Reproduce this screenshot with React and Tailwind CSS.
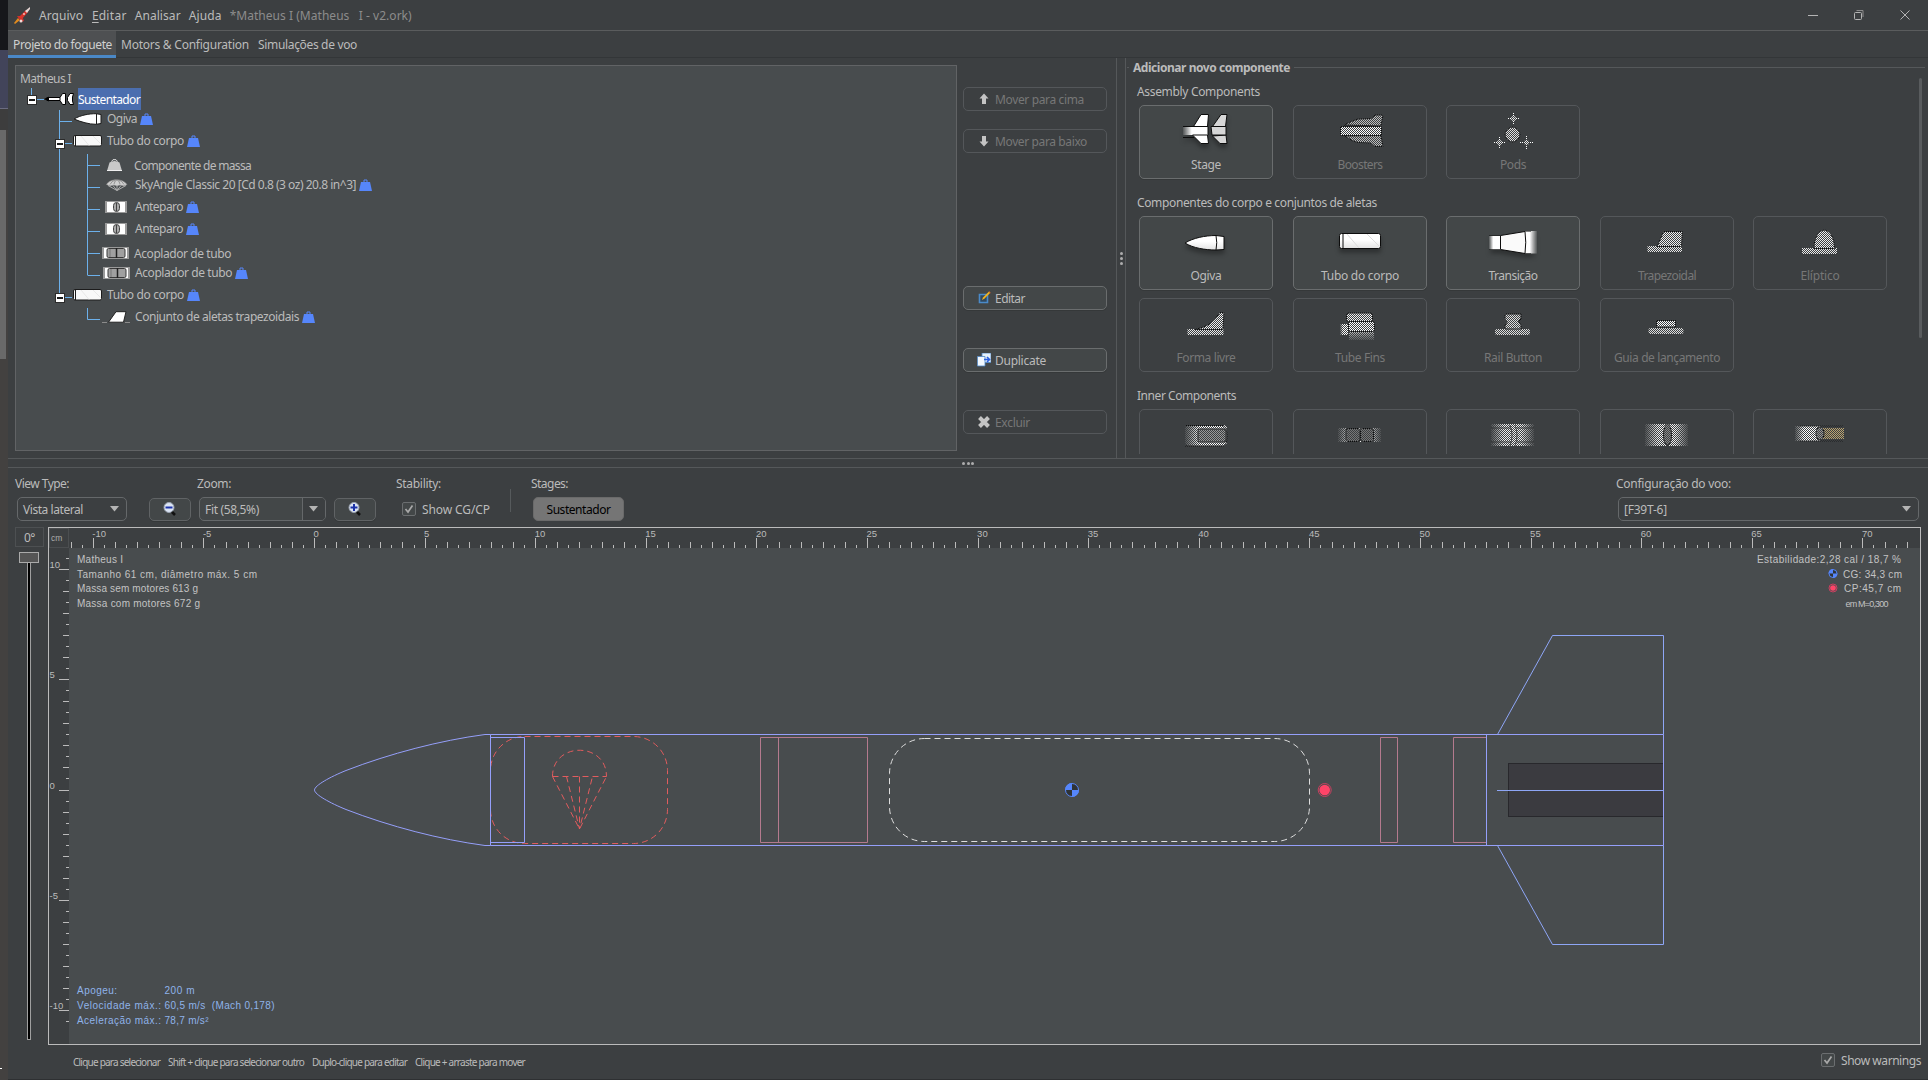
import { useLayoutEffect, useRef } from "react";

/* Text whose tracking is adjusted so that it spans `w` pixels. */
function T({ w, className = "", children }) {
  const ref = useRef(null);
  useLayoutEffect(() => {
    const el = ref.current;
    if (!w) return;
    el.style.letterSpacing = "0px";
    const natural = el.getBoundingClientRect().width;
    el.style.letterSpacing = `${(w - natural) / el.textContent.length}px`;
  }, [w]);
  return (
    <span ref={ref} className={`inline-block whitespace-pre shrink-0 ${className}`}>
      {children}
    </span>
  );
}

/* ---------- title bar, tabs ---------- */

function TitleBar() {
  return (
    <header className="flex h-[31px] shrink-0 items-center border-b border-[#5a5c5d] pl-1.5 pt-0.5">
      <svg width="18" height="18" viewBox="0 0 18 18" className="mr-[7px]">
        <path d="M0 16 L4 11 L6 13 L1 17Z" fill="#e08a1e" />
        <path d="M3 9 L8 9 L10 14 L7 15 L5 12Z" fill="#c9302a" />
        <path d="M5 10 L12 3 L14 5 L8 12Z" fill="#d8332b" />
        <path d="M11 4 L16 0 L16 2 L13 6Z" fill="#e6d6d4" />
        <circle cx="7" cy="14" r="1.5" fill="#f3d9d6" />
        <circle cx="10" cy="7" r="1" fill="#f0bcb8" />
      </svg>
      <T w={44}>Arquivo</T>
      <span className="ml-[9px] flex"><T className="underline underline-offset-2">E</T><T w={28}>ditar</T></span>
      <T w={46} className="ml-2">Analisar</T>
      <T w={33} className="ml-2">Ajuda</T>
      <T w={182} className="ml-2 text-[#8c8c8c]">*Matheus I (Matheus   I - v2.ork)</T>
      <svg width="120" height="30" viewBox="0 0 120 30" className="-mt-0.5 ml-auto mr-2" fill="none" stroke="#b4b4b4">
        <path d="M8 15.5h10" />
        <rect x="54.5" y="12.5" width="7" height="7" rx="1" />
        <path d="M56.5 10.5h6.5v6.5" stroke="#8c8c8c" />
        <path d="M100.500 10.500l9 9m0-9l-9 9" />
      </svg>
    </header>
  );
}

function Tabs() {
  return (
    <nav className="flex h-[27px] shrink-0 items-center border-b border-[#333638]">
      <div className="flex h-[27px] w-[108px] items-center border-b-[3px] border-[#4a88c7] bg-[#4e5052] pl-[5px] pt-1 text-[#d0d0d0]">
        <T w={99}>Projeto do foguete</T>
      </div>
      <T w={128} className="ml-[5px] pt-0.5">Motors &amp; Configuration</T>
      <T w={99} className="ml-[9px] pt-0.5">Simulações de voo</T>
    </nav>
  );
}

/* ---------- component tree ---------- */

function Weight() {
  return (
    <svg width="13" height="12" viewBox="0 0 13 12" className="ml-[3px] shrink-0">
      <path d="M2 3h9l2 9H0z" fill="#5686fb" />
      <path d="M5 3.500V1h3v2.500" fill="none" stroke="#5686fb" />
    </svg>
  );
}

function StageIcon() {
  return (
    <svg width="30" height="12" viewBox="0 0 30 12">
      <path d="M3 4.500h14v3H3z" fill="#fff" stroke="#000" />
      <path d="M0 6l5-2.500v5z" fill="#000" />
      <path d="M16 4.500l2.500-4h3v11h-3l-2.500-4z" fill="#fff" stroke="#000" />
      <path d="M23.500 4.500l2.500-4h3.500l-1 3.500v4l1 3.500h-3.500l-2.500-4z" fill="#fff" stroke="#000" />
    </svg>
  );
}

function NoseIcon() {
  return (
    <svg width="30" height="12" viewBox="0 0 30 12">
      <path d="M1 6C8 2 16 .7 23 .7L28 1.500v9L23 11.300C16 11.300 8 9 1 6z" fill="#fff" stroke="#1c1c1c" />
      <path d="M23.500 1v10" stroke="#1c1c1c" />
    </svg>
  );
}

function TubeIcon() {
  return (
    <svg width="30" height="12" viewBox="0 0 30 12">
      <rect x=".5" y=".5" width="28" height="10.500" rx="1.500" fill="#f8f8f8" stroke="#1c1c1c" />
      <path d="M2.500 1v10" stroke="#1c1c1c" />
      <path d="M8 1l8 9.500M20 1l8 8" stroke="#e8e8e8" />
    </svg>
  );
}

function MassIcon() {
  return (
    <svg width="15" height="12" viewBox="0 0 15 12">
      <path d="M2.500 3.500Q7.500 .5 12.500 3.500L15 12H0z" fill="#c9c9c9" />
      <path d="M4.500 2.500L6 .7h3l1.500 1.800" fill="none" stroke="#dedede" />
      <path d="M0 11.500h15" stroke="#f0f0f0" />
    </svg>
  );
}

function ChuteIcon() {
  return (
    <svg width="22" height="12" viewBox="0 0 22 12">
      <path d="M.5 5.500C4-.8 17-.8 21 5.500L18 7 14 6 11 7 8 6 4 7z" fill="#cfcfcf" stroke="#8e8e8e" strokeWidth=".6" />
      <path d="M2 6.500L11 11.500 20 6.500M7 6.500l4 5 4-5M11 6v5" fill="none" stroke="#b5b5b5" strokeWidth=".9" />
      <path d="M8 5Q9 1 11 .8Q13 1 14 5M4 5.500Q6 2 9 1M18 5.500Q16 2 13 1" fill="none" stroke="#777" strokeWidth=".7" />
    </svg>
  );
}

function BulkheadIcon() {
  return (
    <svg width="22" height="12" viewBox="0 0 22 12">
      <rect width="22" height="12" fill="#9a9a9a" />
      <rect x="2" y="1" width="18" height="10" fill="#fff" />
      <rect x="8.500" y="1.500" width="6" height="9" rx="3" fill="#aaa" stroke="#444" />
      <path d="M11.500 2v8" stroke="#444" />
    </svg>
  );
}

function CouplerIcon() {
  return (
    <svg width="27" height="12" viewBox="0 0 27 12">
      <rect width="27" height="12" fill="#9a9a9a" />
      <rect x="2" y="1" width="23" height="10" fill="#fff" />
      <rect x="5" y="1.500" width="18" height="9" rx="1.500" fill="#a0a0a0" stroke="#3a3a3a" />
      <path d="M14.500 1v10" stroke="#222" strokeWidth="1.500" />
      <path d="M8 2v8" stroke="#777" />
    </svg>
  );
}

function FinIcon() {
  return (
    <svg width="28" height="12" viewBox="0 0 28 12">
      <path d="M0 11.500h5M23 11.500h5" stroke="#8b8b8b" />
      <path d="M6.500 11.200L14 .7h10L21.500 11.200z" fill="#fff" stroke="#222" />
    </svg>
  );
}

const rows = [
  { pad: "pl-7", gap: "ml-1", icon: <StageIcon />, label: "Sustentador", w: 62, selected: true },
  { pad: "pl-[57px]", gap: "ml-1", icon: <NoseIcon />, label: "Ogiva", w: 30, weight: true },
  { pad: "pl-[57px]", gap: "ml-1", icon: <TubeIcon />, label: "Tubo do corpo", w: 77, weight: true },
  { pad: "pl-[91px]", gap: "ml-3 pt-px", icon: <MassIcon />, label: "Componente de massa", w: 117 },
  { pad: "pl-[90px]", gap: "ml-[7px]", icon: <ChuteIcon />, label: "SkyAngle Classic 20 [Cd 0.8 (3 oz) 20.8 in^3]", w: 221, weight: true },
  { pad: "pl-[89px]", gap: "ml-2", icon: <BulkheadIcon />, label: "Anteparo", w: 48, weight: true },
  { pad: "pl-[89px]", gap: "ml-2", icon: <BulkheadIcon />, label: "Anteparo", w: 48, weight: true },
  { pad: "pl-[86px]", gap: "ml-[5px] pt-px", icon: <CouplerIcon />, label: "Acoplador de tubo", w: 97 },
  { pad: "pl-[87px]", gap: "ml-[5px]", icon: <CouplerIcon />, label: "Acoplador de tubo", w: 97, weight: true },
  { pad: "pl-[57px]", gap: "ml-1", icon: <TubeIcon />, label: "Tubo do corpo", w: 77, weight: true },
  { pad: "pl-[86px]", gap: "ml-[5px]", icon: <FinIcon />, label: "Conjunto de aletas trapezoidais", w: 164, weight: true },
];

function Handle({ x, y }) {
  return (
    <g>
      <rect x={x - 4.5} y={y - 4.5} width="9" height="9" fill="#fff" stroke="#2b2b2b" />
      <path d={`M${x - 3} ${y}h6`} stroke="#1b1b1b" strokeWidth="2" />
    </g>
  );
}

function TreeGuides() {
  const childElbows = [77.5, 99.5, 121.5, 143.5, 165.5, 187.5];
  return (
    <svg width="120" height="250" viewBox="0 0 120 250" className="pointer-events-none absolute left-0 top-[22px]">
      <g stroke="#6cb0ea" fill="none">
        <path d="M15.500 0v8M20 11.500h8" />
        <path d="M43.500 22v187M44 33.500h12M49 55.500h7M49 209.500h7" />
        <path d="M71.500 66v121.500" />
        {childElbows.map((y) => <path key={y} d={`M72 ${y}h12`} />)}
        <path d="M71.500 220v11.500h12.500" />
      </g>
      <Handle x={16} y={12} />
      <Handle x={44} y={56} />
      <Handle x={44} y={210} />
    </svg>
  );
}

function Tree() {
  return (
    <section className="relative ml-[7px] mt-[7px] h-[386px] w-[942px] shrink-0 border border-[#616365] bg-[#484c4e]">
      <div className="flex h-[22px] items-center pl-1"><T w={51} className="pt-[3px]">Matheus I</T></div>
      <div className="relative -mt-[22px] pt-[22px]">
        <TreeGuides />
        {rows.map((r, i) => (
          <div key={i} className={`flex h-[22px] items-center ${r.pad} ${r.weight ? "pb-1" : "pt-px"}`}>
            <span className={`shrink-0 ${r.weight ? "" : "-mt-px"}`}>{r.icon}</span>
            {r.selected ? (
              <span className="-mt-px ml-1 flex h-[22px] w-[63px] items-center bg-[#4b6eaf] pt-0.5 text-white"><T w={62}>{r.label}</T></span>
            ) : (
              <T w={r.w} className={r.gap}>{r.label}</T>
            )}
            {r.weight && <Weight />}
          </div>
        ))}
      </div>
    </section>
  );
}

/* ---------- side actions ---------- */

function Action({ label, w, icon, disabled, className = "" }) {
  return (
    <button className={`flex h-6 w-36 shrink-0 items-center rounded-[5px] border pl-[13px] ${disabled ? "border-[#54575a] text-[#777]" : "border-[#6a6d6e] bg-[#434748] shadow-[0_1px_0_#353839]"} ${className}`}>
      <svg width="14" height="14" viewBox="0 0 14 14" className="mr-1">{icon}</svg>
      <T w={w} className="pt-0.5">{label}</T>
    </button>
  );
}

function Actions() {
  return (
    <aside className="ml-1.5 flex w-[153px] shrink-0 flex-col pt-[29px]">
      <Action disabled label="Mover para cima" w={89} icon={<path d="M7 1.500l4.500 5H9V12H5V6.500H2.500z" fill="#c4c4c4" />} />
      <Action disabled label="Mover para baixo" w={92} className="mt-[18px]" icon={<path d="M7 12.500l4.500-5H9V2H5v5.500H2.500z" fill="#c4c4c4" />} />
      <Action
        label="Editar" w={30} className="mt-[133px]"
        icon={<><path d="M2.500 3.500h8v8h-8z" fill="#31495f" stroke="#4a8ac9" strokeWidth="1.600" /><path d="M5 9l1-2.500 6-6 1.300 1.300-6 6z" fill="#f2b31d" /><path d="M12 .5l1.500 1.300" stroke="#d0552a" /></>}
      />
      <Action
        label="Duplicate" w={51} className="mt-[38px]"
        icon={<><path d="M5 0h9v9.500H5z" fill="#e6f1fb" stroke="#4c86c6" strokeWidth=".8" /><path d="M.4 3.500H8v9.500H.4z" fill="#f2f8fe" stroke="#4c86c6" strokeWidth=".8" /><path d="M7 6.500h5M10 4l2.500 2.500L10 9" fill="none" stroke="#2b5fe0" strokeWidth="1.600" /></>}
      />
      <Action disabled label="Excluir" w={35} className="mt-[38px]" icon={<path d="M2.500 2.500l9 9m0-9l-9 9" stroke="#c4c4c4" strokeWidth="4" />} />
    </aside>
  );
}

/* ---------- component palette ---------- */

const K = "#0c0c0c";

const art = {
  stage: (
    <g stroke={K}>
      <path d="M2 16.500h25v8.500H2z" fill="url(#fadeL)" stroke="none" />
      <path d="M12.500 16.500L20 4.500h7.500l-1 12zM11.500 25L20 33.500h7.500L26.500 25z" fill="#fff" />
      <path d="M2 16.500h25v8.500M2 27.500h11" fill="none" />
      <path d="M31.500 16.500L40 4.500h6l-1.500 12zM31.500 26L39 33.500h7L45 25z" fill="#d6d6d6" />
      <path d="M30 16.500h15v8.500H31z" fill="#d6d6d6" />
    </g>
  ),
  boosters: (
    <g stroke={K}>
      <path d="M9 15l6-3 8-3 13-.5 4-3.500h8l-2 11z" fill="#bdbdbd" />
      <path d="M10 26l7 4.500 6 2 13 .5 4 3.500h8l-2-11z" fill="#bdbdbd" />
      <path d="M5.500 16.500h41v9h-41z" fill="#fff" />
    </g>
  ),
  pods: (
    <g fill="#e6e6e6" stroke="#fff">
      <circle cx="24.500" cy="24.500" r="7.500" fill="#e0e0e0" stroke={K} />
      <path d="M25.500 2v13M19 8.500h13M11.500 26v13M5 32.500h13M38.500 26v13M32 32.500h13" />
      <g stroke="none"><circle cx="25.500" cy="8.500" r="2.500" /><circle cx="11.500" cy="32.500" r="2.500" /><circle cx="38.500" cy="32.500" r="2.500" /></g>
    </g>
  ),
  nose: (
    <g stroke={K}>
      <path d="M4 22C12 17 24 14.500 35 14.500l8 1v13L35 29C24 29 12 27 4 22z" fill="url(#shade)" />
      <path d="M35 14.500q1.500 7 0 14.500" fill="none" />
    </g>
  ),
  tube: (
    <g>
      <rect x="4.500" y="12.500" width="41" height="15" rx="2" fill="url(#shade)" stroke={K} />
      <path d="M8 12.500v15" stroke={K} />
      <path d="M12 13l12 14M32 13l12 12" stroke="#dcdcdc" />
    </g>
  ),
  transition: (
    <g>
      <path d="M1 15h12v13.500H1z" fill="url(#fadeL)" />
      <path d="M37 10h12v22.500H37z" fill="url(#fadeR)" />
      <path d="M12.500 14.500L37 10.500Q38.500 21 37 32.500L12.500 28.500z" fill="#fafafa" stroke={K} />
      <path d="M1 14.500h11M1 28.500h11M37 10.500h6M37 32.500h6" stroke={K} opacity=".5" />
    </g>
  ),
  trapezoid: (
    <g stroke={K}>
      <path d="M5.500 25h34.500v6H5.500z" fill="#e8e8e8" stroke="none" />
      <path d="M15 25.500l6.500-15h19l-1 15z" fill="#eee" />
    </g>
  ),
  elliptic: (
    <g stroke={K}>
      <path d="M7 27h35v6H7z" fill="#e8e8e8" stroke="none" />
      <path d="M19 27.500C19 3 39.500 3 39.500 27.500z" fill="#eee" />
    </g>
  ),
  freeform: (
    <g stroke={K}>
      <path d="M6.500 26h36v6h-36z" fill="#e8e8e8" stroke="none" />
      <path d="M14 26.500Q32 23 38.500 9.500H43l-1 17z" fill="#eee" />
    </g>
  ),
  tubeFins: (
    <g stroke={K}>
      <path d="M5 21h8v11H5z" fill="url(#fadeL)" stroke="none" />
      <path d="M14 28h25v9H14z" fill="url(#fadeDown)" stroke="none" />
      <rect x="11.500" y="10" width="26" height="8.500" rx="2" fill="#eee" />
      <rect x="13.500" y="18.500" width="26" height="10" rx="2" fill="#fff" />
    </g>
  ),
  rail: (
    <g>
      <rect x="7" y="26" width="35" height="6" rx="2" fill="#ddd" />
      <path d="M17 11h16v5l-2.500 2.500L33 22v4H17v-4l2.500-3.500L17 16z" fill="#ddd" stroke={K} />
    </g>
  ),
  lug: (
    <g>
      <rect x="6.500" y="25" width="35" height="6" rx="2" fill="#ddd" />
      <rect x="14.500" y="17.500" width="19" height="6.500" fill="#fff" stroke={K} />
    </g>
  ),
  inner: (
    <g>
      <rect x="4" y="11" width="42" height="21" rx="4" fill="url(#fadeL)" />
      <path d="M4 11.500h38q4 1 4 10.500t-4 10H4" fill="none" stroke={K} />
      <rect x="17" y="15" width="28" height="13" rx="2" fill="#9a9a9a" stroke={K} />
    </g>
  ),
  coupler: (
    <g>
      <path d="M3 14h43v14H3z" fill="url(#fadeB)" />
      <rect x="11" y="14.500" width="14" height="13" rx="2" fill="#777" stroke={K} />
      <rect x="25.500" y="14.500" width="13" height="13" rx="2" fill="#777" stroke={K} />
    </g>
  ),
  ring: (
    <g>
      <path d="M3 10h43v22H3z" fill="url(#fadeB)" />
      <path d="M22 11q4 10 0 21M27 11q4 10 0 21M3 14h20M3 28h20M29 14h17M29 28h17" fill="none" stroke={K} opacity=".7" />
    </g>
  ),
  bulkhead: (
    <g>
      <path d="M3 10h43v22H3z" fill="url(#fadeB)" />
      <ellipse cx="25.500" cy="21" rx="4" ry="10.500" fill="#8a8a8a" stroke={K} />
    </g>
  ),
  block: (
    <g>
      <path d="M0 12h25v15H0z" fill="url(#fadeL)" />
      <path d="M27 14h22v11H27z" fill="#d9bd7b" opacity=".8" />
      <path d="M4 12h44M4 27h44" stroke={K} opacity=".7" />
      <ellipse cx="25" cy="19.500" rx="4" ry="6.500" fill="#999" stroke={K} />
    </g>
  ),
};

function Defs() {
  return (
    <svg width="0" height="0" className="absolute">
      <defs>
        <linearGradient id="fadeL"><stop offset="0" stopColor="#fff" stopOpacity=".1" /><stop offset=".35" stopColor="#fff" /></linearGradient>
        <linearGradient id="fadeR"><stop offset=".4" stopColor="#fff" /><stop offset="1" stopColor="#fff" stopOpacity=".1" /></linearGradient>
        <linearGradient id="fadeB"><stop offset="0" stopColor="#eee" stopOpacity=".1" /><stop offset=".3" stopColor="#eee" /><stop offset=".7" stopColor="#eee" /><stop offset="1" stopColor="#eee" stopOpacity=".1" /></linearGradient>
        <linearGradient id="fadeDown" x2="0" y2="1"><stop offset="0" stopColor="#ccc" /><stop offset="1" stopColor="#ccc" stopOpacity=".2" /></linearGradient>
        <linearGradient id="shade" x2="0" y2="1"><stop offset=".4" stopColor="#fff" /><stop offset="1" stopColor="#e2e2e2" /></linearGradient>
        <pattern id="checker" width="2" height="2" patternUnits="userSpaceOnUse">
          <path d="M0 0h1v1H0zM1 1h1v1H1z" fill="#fff" />
        </pattern>
        <mask id="dither" maskUnits="userSpaceOnUse" x="0" y="0" width="50" height="40">
          <rect width="50" height="40" fill="url(#checker)" shapeRendering="crispEdges" />
        </mask>
      </defs>
    </svg>
  );
}

function Part({ icon, label, w, on }) {
  return (
    <button className={`flex h-[74px] flex-col items-center rounded-[5px] border pt-1 ${on ? "border-[#6a6d6e] bg-[#434748] shadow-[0_1px_0_#353839]" : "border-[#54575a] text-[#777]"}`}>
      <svg width="50" height="40" viewBox="0 0 50 40" className={on ? "drop-shadow-[0_4px_2px_rgba(0,0,0,0.3)]" : ""}>
        <g mask={on ? undefined : "url(#dither)"}>{art[icon]}</g>
      </svg>
      <T w={w} className="mt-[7px]">{label}</T>
    </button>
  );
}

function PartGrid({ children }) {
  return <div className="ml-0.5 mt-1 grid w-[748px] grid-cols-[154px_153px_154px_153px_134px] gap-y-2 *:w-[134px]">{children}</div>;
}

function Palette() {
  return (
    <section className="flex min-w-0 flex-1 flex-col overflow-hidden pr-[3px]">
      <div className="flex h-[18px] items-center gap-1 pl-px">
        <span className="h-px w-0.5 bg-[#55585a]" />
        <T w={157} className="pt-px font-bold">Adicionar novo componente</T>
        <span className="h-px flex-1 bg-[#55585a]" />
      </div>
      <div className="flex h-[378px] overflow-hidden pl-[11px] pt-0.5">
        <div className="flex-1">
          <T w={123} className="mt-[5px] block! w-fit leading-[18px]">Assembly Components</T>
          <PartGrid>
            <Part on icon="stage" label="Stage" w={30} />
            <Part icon="boosters" label="Boosters" w={45} />
            <Part icon="pods" label="Pods" w={26} />
          </PartGrid>
          <T w={240} className="mt-[15px] block! w-fit leading-[18px]">Componentes do corpo e conjuntos de aletas</T>
          <PartGrid>
            <Part on icon="nose" label="Ogiva" w={31} />
            <Part on icon="tube" label="Tubo do corpo" w={78} />
            <Part on icon="transition" label="Transição" w={49} />
            <Part icon="trapezoid" label="Trapezoidal" w={58} />
            <Part icon="elliptic" label="Elíptico" w={39} />
            <Part icon="freeform" label="Forma livre" w={59} />
            <Part icon="tubeFins" label="Tube Fins" w={50} />
            <Part icon="rail" label="Rail Button" w={58} />
            <Part icon="lug" label="Guia de lançamento" w={106} />
          </PartGrid>
          <T w={99} className="mt-[15px] block! w-fit leading-[18px]">Inner Components</T>
          <PartGrid>
            <Part icon="inner" />
            <Part icon="coupler" />
            <Part icon="ring" />
            <Part icon="bulkhead" />
            <Part icon="block" />
          </PartGrid>
        </div>
        <div className="mr-[3px] h-[260px] w-[3px] rounded-full bg-[#595c5e]" />
      </div>
    </section>
  );
}

/* ---------- view toolbar ---------- */

function Arrow() {
  return <svg width="10" height="6" viewBox="0 0 10 6"><path d="M0 0h9L4.500 5.500z" fill="#b4b4b4" /></svg>;
}

function Magnifier({ plus }) {
  return (
    <svg width="16" height="16" viewBox="0 0 16 16">
      <path d="M9 10l4 4" stroke="#111" strokeWidth="2.500" />
      <circle cx="7" cy="6.500" r="5" fill="#dbe4f4" stroke="#9aa3b0" />
      <path d={plus ? "M3.500 6.500h7M7 3v7" : "M3.500 6.500h7"} stroke="#1b32a8" strokeWidth="2" />
    </svg>
  );
}

function Check() {
  return (
    <span className="flex h-3.5 w-3.5 items-center justify-center rounded-[2px] border border-[#6b6e70] bg-[#434748]">
      <svg width="10" height="10" viewBox="0 0 10 10"><path d="M1.500 5l2.500 3L8.500 1.500" fill="none" stroke="#a9a9a9" strokeWidth="1.700" /></svg>
    </span>
  );
}

function ZoomButton({ plus, className = "" }) {
  return (
    <button className={`flex h-[23px] w-[42px] items-center justify-center rounded-[5px] border border-[#606365] bg-[#434748] shadow-[0_1px_0_#353839] ${className}`}>
      <Magnifier plus={plus} />
    </button>
  );
}

function Toolbar() {
  return (
    <div className="flex h-[59px] shrink-0 pt-1.5">
      <div className="w-[134px] pl-[7px]">
        <T w={54} className="leading-[20px]">View Type:</T>
        <div className="ml-0.5 mt-[3px] flex h-6 w-[110px] items-center justify-between rounded-[5px] border border-[#65686a] pl-[5px] pr-1.5">
          <T w={60} className="pt-px">Vista lateral</T><Arrow />
        </div>
      </div>
      <div className="w-[246px] pl-[7px]">
        <T w={34} className="ml-12 leading-[20px]">Zoom:</T>
        <div className="mt-[3px] flex items-center">
          <ZoomButton />
          <div className="ml-2 flex h-6 w-[127px] items-center rounded-[5px] border border-[#65686a] bg-[#434748] pl-[5px]">
            <T w={54} className="pt-px">Fit (58,5%)</T>
            <span className="ml-auto flex h-full w-[23px] items-center justify-center rounded-r-[4px] border-l border-[#65686a] bg-[#3c3f41]"><Arrow /></span>
          </div>
          <ZoomButton plus className="ml-2" />
        </div>
      </div>
      <div className="w-[122px] pl-2">
        <T w={45} className="leading-[20px]">Stability:</T>
        <div className="ml-1.5 mt-[3px] flex h-6 items-center gap-1.5"><Check /><T w={68} className="pt-px">Show CG/CP</T></div>
      </div>
      <div className="mt-[15px] h-[23px] w-px bg-[#565a5c]" />
      <div className="ml-5">
        <T w={37} className="leading-[20px]">Stages:</T>
        <button className="ml-0.5 mt-[3px] flex h-6 w-[91px] items-center justify-center rounded-[5px] border border-[#6a6a6a] bg-[#757575] pt-px text-black"><T w={64}>Sustentador</T></button>
      </div>
      <div className="ml-auto mr-[9px] w-[303px]">
        <T w={115} className="leading-[20px]">Configuração do voo:</T>
        <div className="ml-0.5 mt-[3px] flex h-6 items-center justify-between rounded-[5px] border border-[#65686a] pl-[5px] pr-1.5">
          <T w={43} className="pt-px">[F39T-6]</T><Arrow />
        </div>
      </div>
    </div>
  );
}

/* ---------- rocket drawing ---------- */

const PX = 22.12;
const snap = (v) => Math.round(v - 0.5) + 0.5;

function RulerX() {
  const ticks = [];
  for (let h = -22; h <= 144; h++) {
    const x = snap(314.5 + (h * PX) / 2);
    const len = h % 10 === 0 ? 10 : h % 2 === 0 ? 6 : 3;
    ticks.push(<path key={h} d={`M${x} ${548 - len}V548`} />);
  }
  const labels = [-10, -5, 0, 5, 10, 15, 20, 25, 30, 35, 40, 45, 50, 55, 60, 65, 70];
  return (
    <g>
      <rect x="49" y="528" width="1871" height="20" fill="#3c3f41" />
      <g stroke="#bbb">{ticks}</g>
      <g fill="#bbb" fontSize="9.500">
        {labels.map((n) => <text key={n} x={313.5 + n * PX} y="537">{n}</text>)}
      </g>
    </g>
  );
}

function RulerY() {
  const ticks = [];
  for (let h = -21; h <= 21; h++) {
    const y = snap(790 - (h * 22.07) / 2);
    const len = h % 10 === 0 ? 10 : h % 2 === 0 ? 6 : 3;
    ticks.push(<path key={h} d={`M${69 - len} ${y}H69`} />);
  }
  return (
    <g>
      <rect x="49" y="528" width="20" height="516" fill="#3c3f41" />
      <g stroke="#bbb">{ticks}</g>
      <g fill="#bbb" fontSize="9.500">
        {[10, 5, 0, -5, -10].map((n) => <text key={n} x="49.500" y={788.500 - n * 22.07}>{n}</text>)}
      </g>
      <rect x="49.500" y="528.500" width="19" height="19" fill="#3c3f41" stroke="#4b4e50" />
      <text x="51" y="541" fontSize="8.500" fill="#aaa">cm</text>
    </g>
  );
}

function CG({ x, y, r }) {
  return (
    <g>
      <circle cx={x} cy={y} r={r - 0.5} fill="#2f3336" stroke="#5686fb" />
      <path d={`M${x} ${y}V${y - r}A${r} ${r} 0 0 0 ${x - r} ${y}zM${x} ${y}V${y + r}A${r} ${r} 0 0 0 ${x + r} ${y}z`} fill="#5686fb" />
    </g>
  );
}

function CP({ x, y, r }) {
  return (
    <g>
      <circle cx={x} cy={y} r={r - 0.5} fill="none" stroke="#c94060" />
      <circle cx={x} cy={y} r={r - 1.7} fill="#ff4468" />
    </g>
  );
}

const notes = [
  [77, 563, 46, "Matheus I"],
  [77, 578, 180, "Tamanho 61 cm, diâmetro máx. 5 cm"],
  [77, 592, 121, "Massa sem motores 613 g"],
  [77, 607, 123, "Massa com motores 672 g"],
  [1757, 563, 144, "Estabilidade:2,28 cal / 18,7 %"],
  [1843, 578, 59, "CG: 34,3 cm"],
  [1844, 592, 57, "CP:45,7 cm"],
];

const flight = [
  [77, 994, 40, "Apogeu:"],
  [164.5, 994, 30, "200 m"],
  [77, 1009, 84, "Velocidade máx.:"],
  [164.5, 1009, 110, "60,5 m/s  (Mach 0,178)"],
  [77, 1024, 84, "Aceleração máx.:"],
  [164.5, 1024, 44, "78,7 m/s²"],
];

function Notes({ items, fill }) {
  return items.map(([x, y, w, text]) => (
    <text key={text} x={x} y={y} textLength={w} fontSize="10" fill={fill} className="whitespace-pre">{text}</text>
  ));
}

function RocketView() {
  return (
    <svg width="1873" height="518" viewBox="48 527 1873 518" className="shrink-0 font-['Liberation_Sans',sans-serif]" fill="none">
      <rect x="48.500" y="527.500" width="1872" height="517" fill="#484c4e" stroke="#bbb" />
      <RulerX />
      <RulerY />
      <Notes items={notes} fill="#c3c3c3" />
      <text x="1845.500" y="607" textLength="43" fontSize="9" fill="#c3c3c3">em M=0,300</text>
      <CG x={1833} y={573.5} r={4.5} />
      <CP x={1833} y={588} r={4.5} />
      <Notes items={flight} fill="#8fb3ea" />

      <rect x="1508.500" y="763.500" width="155" height="53" fill="#3b3b40" stroke="#28282c" />
      <g stroke="#e25c5e" strokeDasharray="6 4">
        <rect x="490.500" y="736.500" width="177" height="107" rx="34" />
        <path d="M552.500 776.500C552.500 741.500 606.500 741.500 606.500 776.500" />
        <path d="M552.500 776.500h54M552.500 776.500L579.500 829 606.500 776.500M566.500 776.500L579.500 829 592.500 776.500M579.500 776.500V829" />
      </g>
      <rect x="889.500" y="738.500" width="420" height="103" rx="35" stroke="#dedede" strokeDasharray="6 4" />
      <g stroke="#b47a8e">
        <path d="M760.500 737.500h107v105h-107zM778.500 737.500v105" />
        <path d="M1380.500 737.500h17v105h-17zM1486 737.500h-32.500v105H1486" />
      </g>
      <g stroke="#959ffa">
        <path d="M490.500 734.500H485C440 740.500 390 753.500 346 770.500C330 777 314.500 785.500 314.500 790C314.500 794.500 330 803 346 809.500C390 826.500 440 839.500 485 845.500H490.500" />
        <path d="M490.500 734.500H1663.500V845.500H490.500zM1486.500 734.500v111M490.500 737.500h34v105h-34z" />
      </g>
      <g stroke="#8ea6f6">
        <path d="M1497.500 734.500L1552.500 635.500H1663.500V734.500M1497.500 845.500L1552.500 944.500H1663.500V845.500" />
        <path d="M1497 790.500h166.500" />
      </g>
      <CG x={1072} y={790} r={7} />
      <CP x={1324.7} y={790} r={7} />
    </svg>
  );
}

function RollSlider() {
  return (
    <div className="ml-[7px] flex w-[33px] shrink-0 flex-col">
      <div className="flex h-5 w-[29px] items-center justify-center border border-[#4d5052] pt-0.5"><T w={11}>0°</T></div>
      <div className="ml-1 mt-[5px] h-[11px] w-5 border border-[#aaa] bg-[#555]" />
      <div className="ml-3 h-[477px] w-1 border border-t-0 border-[#a0a0a0] bg-black" />
    </div>
  );
}

function StatusBar() {
  return (
    <footer className="flex h-[35px] items-center border-b border-[#2e3032] pl-[65px] pr-[7px]">
      <div className="flex gap-2 pb-px text-[10px]">
        <T w={87}>Clique para selecionar</T>
        <T w={136}>Shift + clique para selecionar outro</T>
        <T w={95}>Duplo-clique para editar</T>
        <T w={110}>Clique + arraste para mover</T>
      </div>
      <div className="ml-auto flex items-center gap-1.5 pb-1"><Check /><T w={80} className="pt-0.5">Show warnings</T></div>
    </footer>
  );
}

/* Sliver of the window that lies behind, along the left edge. */
function Behind() {
  return (
    <div className="flex w-2 shrink-0 flex-col bg-[#434140]">
      <div className="h-[50px] bg-[#16171b]" />
      <div className="h-[59px] border-b border-[#6b6c80] bg-[#42445a]" />
      <div className="h-[21px] bg-[#3d3d3d]" />
      <div className="h-[229px] w-1.5 bg-[#696969]" />
      <div className="mt-[709px] h-px w-0.5 bg-white" />
    </div>
  );
}

function Dots() {
  return [0, 1, 2].map((i) => <i key={i} className="size-[3px] rounded-full bg-[#adadad]" />);
}

export default function App() {
  return (
    <div className="flex h-[1080px] w-[1928px] overflow-hidden bg-[#3c3f41] font-['Noto_Sans',sans-serif] text-[12px] leading-4 text-[#bbb]">
      <Defs />
      <Behind />
      <div className="flex min-w-0 flex-1 flex-col">
        <TitleBar />
        <Tabs />
        <div className="flex h-[400px] shrink-0">
          <Tree />
          <Actions />
          <div className="flex w-[10px] shrink-0 flex-col items-center justify-center gap-0.5 border-x border-[#55585a]">
            <Dots />
          </div>
          <Palette />
        </div>
        <div className="flex h-[10px] shrink-0 items-center justify-center gap-[1.5px] border-y border-[#55585a]">
          <Dots />
        </div>
        <Toolbar />
        <div className="flex shrink-0"><RollSlider /><RocketView /></div>
        <StatusBar />
      </div>
    </div>
  );
}
